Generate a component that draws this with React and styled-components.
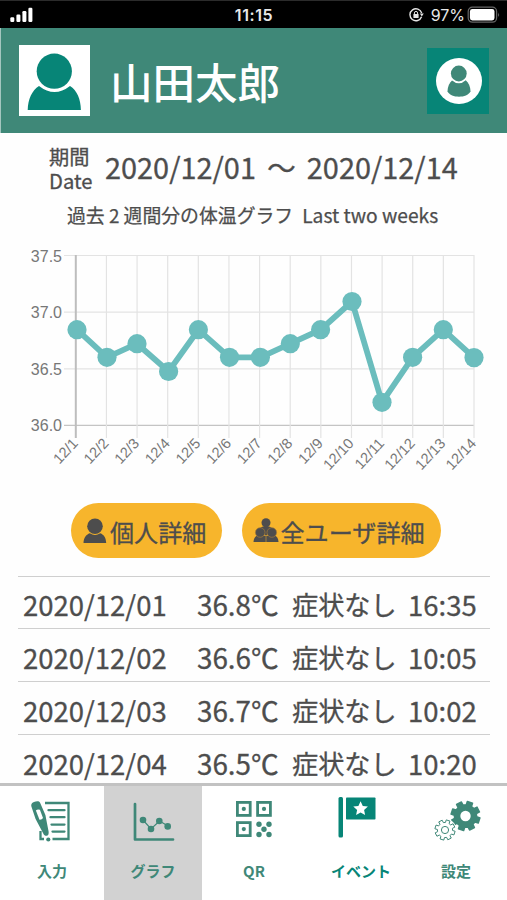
import React from "react";
import styled, { createGlobalStyle } from "styled-components";

const GREEN = "#3f8878";
const TEAL = "#078577";
const TEXT = "#4d4d4d";

const readings = [
  { day: "12/1", x: 77, y: 89.7 },
  { day: "12/2", x: 107, y: 117.3 },
  { day: "12/3", x: 137, y: 103.7 },
  { day: "12/4", x: 168.6, y: 131.5 },
  { day: "12/5", x: 198.4, y: 89.7 },
  { day: "12/6", x: 229.5, y: 117.3 },
  { day: "12/7", x: 260.4, y: 117.3 },
  { day: "12/8", x: 290.3, y: 103.7 },
  { day: "12/9", x: 320.6, y: 89.7 },
  { day: "12/10", x: 352, y: 61.5 },
  { day: "12/11", x: 382, y: 162.3 },
  { day: "12/12", x: 412.6, y: 117.3 },
  { day: "12/13", x: 443.3, y: 89.7 },
  { day: "12/14", x: 474, y: 117.6 },
];

const scale = [
  { label: "37.5", y: 15.5 },
  { label: "37.0", y: 72.2 },
  { label: "36.5", y: 128.8 },
  { label: "36.0", y: 185.3 },
];

const records = [
  { date: "2020/12/01", temp: "36.8℃", state: "症状なし", time: "16:35" },
  { date: "2020/12/02", temp: "36.6℃", state: "症状なし", time: "10:05" },
  { date: "2020/12/03", temp: "36.7℃", state: "症状なし", time: "10:02" },
  { date: "2020/12/04", temp: "36.5℃", state: "症状なし", time: "10:20" },
];

// Outline of a cog with square teeth, centred on cx / cy
const cogPath = (cx, cy, outer, inner, turn = 0) => {
  const teeth = 8;
  const points = [];
  for (let i = 0; i < teeth; i++) {
    const a = ((i + turn) * 2 * Math.PI) / teeth;
    [
      [inner, -0.25],
      [outer, -0.19],
      [outer, 0.19],
      [inner, 0.25],
    ].forEach(([r, d]) => points.push(`${(cx + r * Math.cos(a + d)).toFixed(2)} ${(cy + r * Math.sin(a + d)).toFixed(2)}`));
  }
  return `M${points.join("L")}Z`;
};

function StatusBar() {
  return (
    <Status>
      <svg width="24" height="16" viewBox="0 0 24 16" fill="#fff">
        <rect x="0.3" y="10.2" width="4" height="4.8" rx="1.2" />
        <rect x="6.4" y="7.6" width="4" height="7.4" rx="1.2" />
        <rect x="12.4" y="4" width="4" height="11" rx="1.2" />
        <rect x="18.4" y="0.8" width="4" height="14.2" rx="1.2" />
      </svg>
      <Clock>11:15</Clock>
      <Battery>
        <svg width="15" height="14" viewBox="0 0 15 14">
          <path d="M12.6 8.8A6 6 0 1 1 12.7 5" fill="none" stroke="#e4e4e4" strokeWidth="1.4" />
          <path d="M10.8 5.6h4l-2 3z" fill="#e4e4e4" />
          <rect x="4.4" y="6" width="5.2" height="4" rx="0.6" fill="#e4e4e4" />
          <path d="M5.4 6.4V5a1.6 1.6 0 0 1 3.2 0v1.4" fill="none" stroke="#e4e4e4" />
        </svg>
        <span>97%</span>
        <svg width="34" height="18" viewBox="0 0 34 18">
          <rect x="1.2" y="1.2" width="28.4" height="15" rx="4.2" fill="none" stroke="#666" strokeWidth="1.2" />
          <rect x="2.9" y="3" width="24.6" height="11.4" rx="2.4" fill="#fff" />
          <path d="M31.2 6.4q1.8 2.3 0 4.6z" fill="#777" />
        </svg>
      </Battery>
    </Status>
  );
}

function Header() {
  return (
    <HeaderBar>
      <Avatar>
        <svg width="71" height="71" viewBox="0 0 71 71" fill={TEAL}>
          <path d="M8.7 65C9 54 13 45.5 20 41q15.5 12 31 0C58 45.5 61.7 54 61.9 65z" />
          <circle cx="35.3" cy="26.2" r="19.6" fill="#fff" />
          <circle cx="35.3" cy="26.2" r="17.6" />
        </svg>
      </Avatar>
      <UserName>山田太郎</UserName>
      <AccountButton>
        <svg width="46" height="46" viewBox="0 0 46 46">
          <circle cx="23" cy="23" r="23" fill="#fff" />
          <path d="M11.5 33.5c0-5 2-9 5-11.500h13c3 2.500 5 6.500 5 11.500-2 3.600-6.500 5.200-11.500 5.200s-9.500-1.600-11.500-5.200z" fill={GREEN} />
          <circle cx="22.8" cy="16" r="9.3" fill="#fff" />
          <circle cx="22.8" cy="15.5" r="7.9" fill={GREEN} />
        </svg>
      </AccountButton>
    </HeaderBar>
  );
}

function TemperatureChart() {
  return (
    <ChartSvg width="507" height="240" viewBox="0 0 507 240">
      {scale.map(({ label, y }) => (
        <g key={label}>
          <line x1="64" x2="474" y1={y} y2={y} stroke={label === "36.0" ? "#c4c4c4" : "#e3e3e3"} strokeWidth="1.2" />
          <text x="62" y={y + 6} fontSize="16" textAnchor="end">{label}</text>
        </g>
      ))}
      {readings.map(({ day }, i) => {
        const x = 75.8 + i * 30.63;
        return (
          <g key={day}>
            <line x1={x} x2={x} y1="15" y2="198" stroke={i === 0 ? "#bdbdbd" : "#e3e3e3"} strokeWidth={i === 0 ? 2 : 1.2} />
            <text transform={`translate(${x + 3} 204) rotate(-47)`} fontSize="14.6" textAnchor="end">{day}</text>
          </g>
        );
      })}
      <polyline points={readings.map(({ x, y }) => `${x},${y}`).join(" ")} fill="none" stroke="#6bbdbd" strokeWidth="5.8" />
      {readings.map(({ day, x, y }) => (
        <circle key={day} cx={x} cy={y} r="9.6" fill="#6bbdbd" />
      ))}
    </ChartSvg>
  );
}

const PersonIcon = () => (
  <svg width="24" height="26" viewBox="0 0 24 26" fill={TEXT}>
    <path d="M.5 25C.7 20 3 16.500 6.800 15.200q5.200 3.600 10.400 0C21 16.500 23 20 23.200 25z" />
    <circle cx="12" cy="8.3" r="7.8" />
  </svg>
);

const GroupIcon = () => (
  <svg width="26" height="26" viewBox="0 0 26 26" fill={TEXT}>
    <path d="M.5 24c.2-3.500 1.500-5.500 3.500-6.200h18c2 .7 3.300 2.700 3.500 6.200z" />
    <path d="M6 12.500q1-3.500 4-4h6q3 .5 4 4l-7 5z" />
    <circle cx="13" cy="4.8" r="4.5" />
    <g stroke="#a57b38" strokeWidth="0.7">
      <circle cx="7.2" cy="14.5" r="4.8" />
      <circle cx="18.8" cy="14.5" r="4.8" />
    </g>
    <path d="M13 18v6" stroke="#b98a35" strokeWidth="0.8" />
  </svg>
);

const InputIcon = () => (
  <svg width="40" height="44" viewBox="0 0 40 44">
    <path d="M14 3h23.500v36H21.500M9.500 31v8H13" fill="none" stroke={GREEN} strokeWidth="2.3" />
    <path d="M17.500 10.200h16M19.500 17.200h14M20.500 24.600h13M21.500 31.600h12" stroke={GREEN} strokeWidth="2.3" strokeLinecap="round" />
    <path d="M.4 6.400C-.2 4 1 2.600 3 1.900S8 .3 9.100 2.800L14.400 15 17.600 31.500c.3 3-.5 4-1.900 4.200s-2.600-.5-3.300-2L4.600 19z" fill={GREEN} />
    <path d="M4.900 10.500q1.600-1.700 4-.8L12 18q-1 2-3.500 1.800z" fill="#fff" />
    <circle cx="17.3" cy="39.5" r="2.1" fill={GREEN} />
  </svg>
);

const GraphIcon = () => (
  <svg width="42" height="40" viewBox="0 0 42 40" fill={GREEN}>
    <path d="M2 2v35.500h38" fill="none" stroke={GREEN} strokeWidth="2.7" strokeLinecap="round" strokeLinejoin="round" />
    <path d="m10 18 8 9 8.500-8 8.500 5" fill="none" stroke={GREEN} strokeWidth="1.2" />
    <circle cx="10" cy="18" r="3.3" />
    <circle cx="18" cy="27" r="3.3" />
    <circle cx="26.3" cy="19" r="3.3" />
    <circle cx="34.7" cy="24.4" r="3.3" />
  </svg>
);

const QrIcon = () => (
  <svg width="36" height="37" viewBox="0 0 36 37" fill={GREEN}>
    {[[0, 0], [0, 20.2], [20.2, 0]].map(([x, y]) => (
      <g key={`${x}-${y}`}>
        <rect x={x + 1.4} y={y + 1.4} width="12.8" height="13" fill="none" stroke={GREEN} strokeWidth="2.8" />
        <circle cx={x + 7.8} cy={y + 7.9} r="2.1" />
      </g>
    ))}
    {[[23, 23.3], [33, 23.3], [28, 28.3], [23, 33.5], [33, 33.5]].map(([x, y]) => (
      <circle key={`${x}-${y}`} cx={x} cy={y} r="2.7" />
    ))}
  </svg>
);

const EventIcon = () => (
  <svg width="38" height="41" viewBox="0 0 38 41">
    <rect x="0.5" y="0" width="4.5" height="40.5" rx="1.5" fill={TEAL} />
    <rect x="8" y="0.5" width="29.5" height="22" rx="0.8" fill={TEAL} />
    <path d="m22.600 4.200 2.200 4.700 5.100.6-3.800 3.500 1 5.100-4.500-2.500-4.500 2.500 1-5.100-3.800-3.500 5.100-.6z" fill="#fff" />
  </svg>
);

const SettingsIcon = () => (
  <svg width="48" height="42" viewBox="0 0 48 42">
    <path d={cogPath(31.5, 16, 14.6, 11.2, 0.4)} fill={GREEN} stroke={GREEN} strokeWidth="1.4" strokeLinejoin="round" />
    <circle cx="31.5" cy="16" r="5.2" fill="#fff" />
    <circle cx="11" cy="30" r="11.4" fill="#fff" />
    <path d={cogPath(11, 30, 10.2, 7.6, 0.4)} fill="#fff" stroke={GREEN} strokeWidth="1" strokeLinejoin="round" />
    <circle cx="11" cy="30" r="3.6" fill="none" stroke={GREEN} strokeWidth="1" />
  </svg>
);

const tabs = [
  { label: "入力", Icon: InputIcon, top: 14, nudge: -2 },
  { label: "グラフ", Icon: GraphIcon, top: 16, nudge: 1 },
  { label: "QR", Icon: QrIcon, top: 15, nudge: 0 },
  { label: "イベント", Icon: EventIcon, top: 11, nudge: -9, bright: true },
  { label: "設定", Icon: SettingsIcon, top: 14, nudge: 3 },
];

export default function App() {
  return (
    <Screen>
      <GlobalStyle />
      <StatusBar />
      <Header />
      <Period>
        <PeriodLabel>
          <span>期間</span>
          <span>Date</span>
        </PeriodLabel>
        <PeriodDates>
          <span>2020/12/01</span>
          <span>〜</span>
          <span>2020/12/14</span>
        </PeriodDates>
      </Period>
      <Caption>
        <span>過去 2 週間分の体温グラフ</span>
        <span>Last two weeks</span>
      </Caption>
      <TemperatureChart />
      <Actions>
        <PillButton $width={151}>
          <PersonIcon />
          個人詳細
        </PillButton>
        <PillButton $width={199.5}>
          <GroupIcon />
          全ユーザ詳細
        </PillButton>
      </Actions>
      <Records>
        {records.map(({ date, temp, state, time }) => (
          <RecordRow key={date}>
            <span>{date}</span>
            <RecordTemp>{temp}</RecordTemp>
            <RecordState>{state}</RecordState>
            <span>{time}</span>
          </RecordRow>
        ))}
      </Records>
      <TabBar>
        {tabs.map(({ label, Icon, top, nudge, bright }) => (
          <Tab key={label} $active={label === "グラフ"} $bright={bright}>
            <TabIcon $top={top} $nudge={nudge}>
              <Icon />
            </TabIcon>
            <TabLabel>{label}</TabLabel>
          </Tab>
        ))}
      </TabBar>
    </Screen>
  );
}

const GlobalStyle = createGlobalStyle`
  * {
    box-sizing: border-box;
  }
  body {
    margin: 0;
    background: #fff;
  }
  svg {
    display: block;
    flex-shrink: 0;
  }
`;

const Screen = styled.div`
  width: 507px;
  height: 900px;
  overflow: hidden;
  display: flex;
  flex-direction: column;
  background: #fefefe;
  color: ${TEXT};
  font-family: "Noto Sans CJK JP", sans-serif;
  font-weight: 400;
  white-space: nowrap;
`;

const Status = styled.div`
  height: 28px;
  flex-shrink: 0;
  display: grid;
  grid-template-columns: 1fr auto 1fr;
  align-items: center;
  padding: 1px 6px 0 10px;
  border-top: 1px solid #2b2b2b;
  background: #000;
  color: #e8e8e8;
  font-family: Inter, sans-serif;
`;

const Clock = styled.span`
  margin-right: 3px;
  font-size: 16px;
  font-weight: 600;
  letter-spacing: 0.6px;
`;

const Battery = styled.div`
  display: flex;
  justify-content: flex-end;
  align-items: center;
  font-size: 16px;
  font-weight: 400;

  span {
    margin: 0 2px 0 7px;
  }
`;

const HeaderBar = styled.header`
  height: 105px;
  flex-shrink: 0;
  display: flex;
  align-items: center;
  padding: 0 18px 0 18px;
  border-left: 1px solid #a4c6bf;
  background: ${GREEN};
`;

const Avatar = styled.div`
  width: 71px;
  height: 71px;
  background: #fff;
`;

const UserName = styled.h1`
  margin: 0 auto 0 20px;
  color: #fff;
  font-size: 42.5px;
  line-height: 60px;
  font-weight: 500;
`;

const AccountButton = styled.div`
  width: 62px;
  height: 66px;
  display: flex;
  align-items: center;
  justify-content: center;
  padding-left: 1px;
  background: ${TEAL};
`;

const Period = styled.div`
  height: 63px;
  flex-shrink: 0;
  display: flex;
  padding: 12px 0 0 49px;
  -webkit-text-stroke: 0.3px ${TEXT};
`;

const PeriodLabel = styled.div`
  width: 56px;
  display: flex;
  flex-direction: column;
  font-size: 20.2px;
  line-height: 24px;
`;

const PeriodDates = styled.div`
  display: flex;
  gap: 11px;
  font-size: 28.9px;
  line-height: 43px;
`;

const Caption = styled.div`
  height: 44px;
  flex-shrink: 0;
  display: flex;
  gap: 9px;
  padding-left: 67px;
  font-size: 18.85px;
  line-height: 38px;
  -webkit-text-stroke: 0.25px ${TEXT};

  span:last-child {
    font-size: 19.2px;
  }
`;

const ChartSvg = styled.svg`
  fill: #777;
  font-family: "Liberation Sans", Arial, sans-serif;
  font-weight: 400;
`;

const Actions = styled.div`
  height: 96px;
  flex-shrink: 0;
  display: flex;
  align-items: flex-start;
  gap: 19.5px;
  padding: 23px 0 0 71px;
`;

const PillButton = styled.button`
  width: ${({ $width }) => $width}px;
  height: 55px;
  display: flex;
  align-items: center;
  gap: 3px;
  padding: 1px 0 0 12px;
  border: none;
  border-radius: 28px;
  background: #f7b52c;
  color: ${TEXT};
  font: inherit;
  font-size: 24.1px;
  -webkit-text-stroke: 0.3px ${TEXT};

  & + & {
    gap: 2px;
    padding-left: 11px;
  }
`;

const Records = styled.div`
  flex: 1;
  min-height: 0;
  overflow: hidden;
  margin: 0 17px 0 18px;
`;

const RecordRow = styled.div`
  height: 53px;
  display: grid;
  grid-template-columns: 174px 95px 116px 1fr;
  padding-left: 5px;
  border-top: 1px solid #cfcfcf;
  font-size: 27.5px;
  line-height: 57px;
  -webkit-text-stroke: 0.3px ${TEXT};

  &:first-child {
    height: 52px;
    line-height: 55px;
  }
`;

const RecordTemp = styled.span`
  font-size: 27.8px;
`;

const RecordState = styled.span`
  font-size: 26.2px;
`;

const TabBar = styled.nav`
  height: 117px;
  flex-shrink: 0;
  display: grid;
  grid-template-columns: 104px 98px 104px 110px 80px;
  border-top: 3px solid #c2c2c2;
  background: #fff;
`;

const Tab = styled.div`
  display: flex;
  flex-direction: column;
  align-items: center;
  background: ${({ $active }) => ($active ? "#d2d2d2" : "transparent")};
  color: ${({ $bright }) => ($bright ? TEAL : GREEN)};
`;

const TabIcon = styled.div`
  height: 73px;
  padding-top: ${({ $top }) => $top}px;
  margin-left: ${({ $nudge }) => $nudge}px;
`;

const TabLabel = styled.span`
  font-size: 15px;
  font-weight: 700;
  line-height: 23px;
`;
